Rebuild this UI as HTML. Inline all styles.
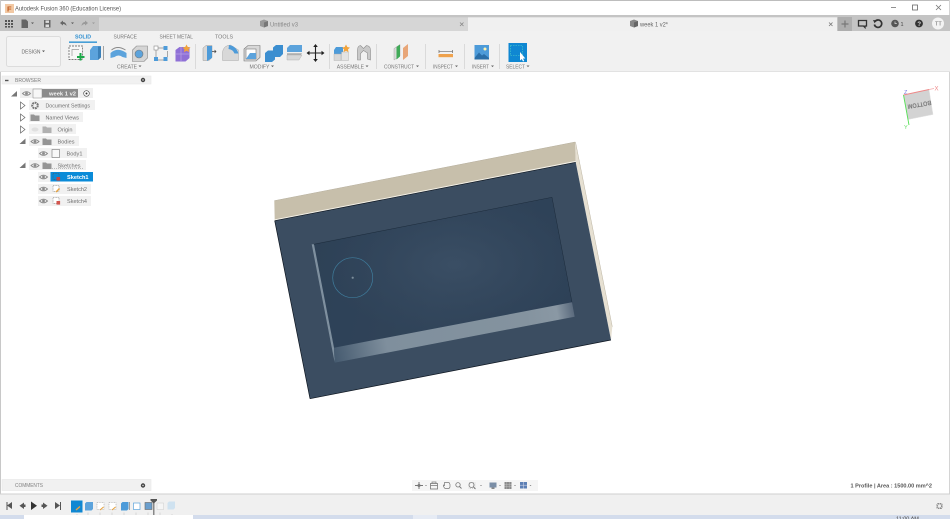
<!DOCTYPE html>
<html><head><meta charset="utf-8">
<style>
html,body{margin:0;padding:0;background:#fff;width:950px;height:519px;overflow:hidden}
svg{display:block}
text{font-family:"Liberation Sans",sans-serif;fill:#707070;font-size:5.3px}
.b{filter:url(#s)}
</style></head><body>
<svg width="950" height="519" viewBox="0 0 950 519" xmlns="http://www.w3.org/2000/svg">
<defs>
<filter id="s" x="-5%" y="-5%" width="110%" height="110%"><feGaussianBlur stdDeviation="0.38"/></filter>
<linearGradient id="fl" gradientUnits="userSpaceOnUse" x1="314" y1="244" x2="572" y2="302">
<stop offset="0" stop-color="#2f4359"/><stop offset=".5" stop-color="#35495f"/><stop offset="1" stop-color="#2f435a"/></linearGradient>
<radialGradient id="fr" gradientUnits="userSpaceOnUse" cx="455" cy="265" r="130" gradientTransform="translate(455 265) scale(1 .55) rotate(-11) translate(-455 -265)">
<stop offset="0" stop-color="#3c5066" stop-opacity=".75"/><stop offset="1" stop-color="#2c3f54" stop-opacity=".5"/></radialGradient>
<linearGradient id="wl" gradientUnits="userSpaceOnUse" x1="334" y1="355" x2="574" y2="310">
<stop offset="0" stop-color="#465b70"/><stop offset=".22" stop-color="#7f8f9d"/><stop offset=".8" stop-color="#84939f"/><stop offset=".93" stop-color="#8a98a4"/><stop offset="1" stop-color="#59697c"/></linearGradient>
<g id="eye"><path d="M-4 0Q0-3.6 4 0Q0 3.6-4 0Z" fill="#f4f4f4" stroke="#8a8a8a" stroke-width=".9"/><circle r="1.4" fill="#8a8a8a"/></g>
<g id="fold"><path d="M-4.5-3h3.5l1 1h4.500v5.500h-9z" fill="#959595"/></g>
</defs>

<!-- window frame -->
<rect x="0" y="0" width="950" height="1" fill="#bdbdbd"/>
<rect x="0" y="0" width="1" height="519" fill="#c8c8c8"/>
<rect x="949" y="0" width="1" height="519" fill="#d4d4d4"/>

<!-- title bar -->
<g class="b">
<rect x="5" y="4" width="9" height="9" fill="#f2c9a4"/>
<text x="7" y="11.500" style="font-size:7.500px;font-weight:bold;fill:#c0591a">F</text>
<text x="15" y="10.300" textLength="106" lengthAdjust="spacingAndGlyphs" style="font-size:6.400px;fill:#555">Autodesk Fusion 360 (Education License)</text>
<path d="M891 7.500h5" stroke="#777" stroke-width=".8"/>
<rect x="912.500" y="5" width="5" height="5" fill="none" stroke="#666" stroke-width=".8"/>
<path d="M936 5l5 5M941 5l-5 5" stroke="#777" stroke-width=".8"/>
</g>

<!-- tab row -->
<rect x="0" y="15" width="950" height="16" fill="#c4c4c4"/>
<rect x="99" y="17.300" width="369" height="13.700" fill="#d6d6d6"/>
<rect x="468" y="17.300" width="369" height="13.700" fill="#f0f0f0"/>
<g class="b">
<g fill="#555"><rect x="5" y="20" width="2" height="2"/><rect x="8" y="20" width="2" height="2"/><rect x="11" y="20" width="2" height="2"/><rect x="5" y="23" width="2" height="2"/><rect x="8" y="23" width="2" height="2"/><rect x="11" y="23" width="2" height="2"/><rect x="5" y="26" width="2" height="1.600"/><rect x="8" y="26" width="2" height="1.600"/><rect x="11" y="26" width="2" height="1.600"/></g>
<path d="M21.500 19.500h4.500l2 2v6.500h-6.500z" fill="#666"/><path d="M31 22.500l1.500 1.500 1.500-1.500z" fill="#555"/>
<rect x="44" y="20" width="6.500" height="7.500" fill="#666"/><rect x="45.500" y="20.500" width="3.500" height="2.400" fill="#ddd"/><rect x="45.500" y="24.500" width="3.500" height="2.500" fill="#ddd"/>
<path d="M60 23l3-2.500v1.500q3 0 3.500 4q-1.500-2-3.500-2v1.500z" fill="#666"/><path d="M71 22.500l1.500 1.500 1.500-1.500z" fill="#555"/>
<path d="M88 23l-3-2.500v1.500q-3 0-3.500 4q1.500-2 3.500-2v1.500z" fill="#999"/><path d="M92 22.500l1.500 1.500 1.500-1.500z" fill="#999"/>
<path d="M260 21l4-1.500 4 1.500v5l-4 1.500-4-1.500z" fill="#999"/><path d="M264 22.500v5l4-1.500v-5z" fill="#777"/>
<text x="270" y="26.500" textLength="28" lengthAdjust="spacingAndGlyphs" style="font-size:6.200px;fill:#888">Untitled v3</text>
<path d="M460 22.500l3.500 3.500M463.500 22.500l-3.500 3.500" stroke="#888" stroke-width=".8"/>
<path d="M630 21l4-1.500 4 1.500v5l-4 1.500-4-1.500z" fill="#888"/><path d="M634 22.500v5l4-1.500v-5z" fill="#666"/>
<text x="640" y="26.500" textLength="28" lengthAdjust="spacingAndGlyphs" style="font-size:6.200px;fill:#666">week 1 v2*</text>
<path d="M829 22.500l3.500 3.500M832.500 22.500l-3.500 3.500" stroke="#777" stroke-width=".8"/>
</g>
<rect x="838" y="17" width="14" height="14" fill="#aeaeae"/>
<g class="b">
<path d="M845 20.500v7M841.500 24h7" stroke="#777" stroke-width="1.200"/>
<path d="M858.500 20.500h8v5.500h-1.500v1.500l-1.500-1.500h-5z" fill="none" stroke="#333" stroke-width="1.300"/>
<path d="M875 21.500a3.700 3.700 0 1 1-.6 3" fill="none" stroke="#333" stroke-width="1.700"/><path d="M873 20l3.800.4-2.200 2.800z" fill="#333"/>
<circle cx="895" cy="23.500" r="3.800" fill="#555"/><path d="M895 21.500v2.200h2" stroke="#ddd" stroke-width=".7" fill="none"/>
<text x="900.500" y="26" style="font-size:5.500px;fill:#444">1</text>
<circle cx="919" cy="23.500" r="3.900" fill="#333"/><text x="917.400" y="26" style="font-size:6px;font-weight:bold;fill:#ddd">?</text>
<circle cx="938" cy="23.500" r="6" fill="#f3f3f3"/><text x="935" y="25.500" style="font-size:5.500px;fill:#666">TT</text>
</g>

<!-- ribbon -->
<rect x="0" y="31" width="950" height="40" fill="#f1f1f1"/>
<rect x="0" y="71" width="950" height="1" fill="#e2e2e2"/>
<rect x="6.500" y="36.500" width="54" height="30" rx="2" fill="#f4f4f4" stroke="#dcdcdc"/>
<g class="b">
<text x="21.500" y="53.500" textLength="19" lengthAdjust="spacingAndGlyphs" style="font-size:5.400px;fill:#666">DESIGN</text><path d="M42 50.500l1.500 1.600 1.500-1.600z" fill="#555"/>
<text x="75" y="38.500" textLength="16" lengthAdjust="spacingAndGlyphs" style="fill:#2f8fd0;font-weight:bold;font-size:5.200px">SOLID</text>
<rect x="69" y="41.500" width="28" height="1.300" fill="#1c8ad0"/>
<text x="113.500" y="38.500" textLength="23.500" lengthAdjust="spacingAndGlyphs" style="fill:#777">SURFACE</text>
<text x="159.500" y="38.500" textLength="33.500" lengthAdjust="spacingAndGlyphs" style="fill:#777">SHEET METAL</text>
<text x="215" y="38.500" textLength="18" lengthAdjust="spacingAndGlyphs" style="fill:#777">TOOLS</text>

<!-- create icons -->
<rect x="69" y="46" width="13.500" height="13.500" fill="#f7f7f7" stroke="#555" stroke-width=".7" stroke-dasharray="2 1"/>
<path d="M72 56V49.500h7" fill="none" stroke="#999" stroke-width=".7"/>
<path d="M80.500 53v7.500M77 57h7.500" stroke="#1fa84a" stroke-width="2"/>
<path d="M90 50l3-4h8v11l-3 3h-8z" fill="#5ba3dc"/><path d="M98 46.500h3v11l-3 2.500z" fill="#3b80b8"/>
<path d="M103.500 46v14" stroke="#555" stroke-width=".5"/>
<path d="M110.500 53q7-6.500 16 0v5l-4-1q-4-3-8 0l-4 1z" fill="#5ba3dc"/><path d="M111.500 50q6-5 14 0" fill="none" stroke="#888" stroke-width=".9"/>
<path d="M132.500 50l4-4h11v12l-3.500 3.500h-11.500z" fill="#d5d5d5" stroke="#888" stroke-width=".6"/><circle cx="139" cy="54" r="4" fill="#5ba3dc" stroke="#777" stroke-width=".6"/>
<path d="M157 48h7M167.500 51v6M157 60h7M156 50v7" stroke="#888" stroke-width=".7"/><rect x="154" y="46" width="4" height="4" fill="#fff" stroke="#888" stroke-width=".6"/><rect x="163.500" y="46" width="4" height="4" fill="#4d9bd9"/><rect x="154" y="57" width="4" height="4" fill="#4d9bd9"/><rect x="163.500" y="57" width="4" height="4" fill="#4d9bd9"/>
<path d="M175.500 50l4-3h10v11l-4 3.500h-10z" fill="#8f6fd6"/><path d="M181 47v14M176 54h13" stroke="#b8a2e6" stroke-width=".7"/>
<path d="M186.500 44.500l1.300 2.500 2.700.6-2 1.800.5 2.700-2.500-1.300-2.500 1.300.5-2.700-2-1.800 2.700-.6z" fill="#f2a33a"/>
<text x="117" y="68.500" textLength="20" lengthAdjust="spacingAndGlyphs" style="fill:#777">CREATE</text><path d="M138.500 65.500l1.500 1.600 1.500-1.600z" fill="#666"/>
<rect x="195" y="44" width=".8" height="25" fill="#d5d5d5"/>

<!-- modify icons -->
<path d="M203 48l3-2.500h6v12l-3 3h-6z" fill="#d8d8d8" stroke="#999" stroke-width=".5"/><path d="M207 46l5 0v12l-5 3z" fill="#4d9bd9"/><path d="M212 51.500h4m-1.500-1.500l1.500 1.500-1.500 1.500" stroke="#444" stroke-width=".7" fill="none"/>
<path d="M222.500 52q1-6.500 8-7l8 5v10.500h-16z" fill="#d8d8d8" stroke="#aaa" stroke-width=".5"/><path d="M229 45q7 1 9.500 8.500l-4 0q-1.500-4-6-4.500z" fill="#4d9bd9"/>
<path d="M244 49l4-3.500h12v12l-4 3.500h-12z" fill="#d8d8d8" stroke="#777" stroke-width=".6"/><rect x="246" y="49" width="10" height="10" fill="#fff" stroke="#777" stroke-width=".6"/><path d="M250 53h6v6h-10z" fill="#5ba3dc"/>
<path d="M265 53l3-2.500h5v-3l3-2.500h7v9l-3 3h-5v2.500l-3 2.500h-7z" fill="#3b8ed0"/>
<path d="M287 48l3-3h12v7h-15z" fill="#5ba3dc"/><path d="M287 53.500l15 0-1 1h-14z" fill="#888"/><path d="M287 55h15l-3 5h-12z" fill="#d8d8d8" stroke="#aaa" stroke-width=".4"/>
<path d="M315.500 45.500v15M308 53h15" stroke="#222" stroke-width="1.100"/><path d="M315.500 44l-2.300 3h4.600zM315.500 62l-2.300-3h4.600zM306.500 53l3-2.300v4.600zM324.500 53l-3-2.300v4.600z" fill="#222"/>
<text x="249.500" y="68.500" textLength="20" lengthAdjust="spacingAndGlyphs" style="fill:#777">MODIFY</text><path d="M271 65.500l1.500 1.600 1.500-1.600z" fill="#666"/>
<rect x="329" y="44" width=".8" height="25" fill="#d5d5d5"/>

<!-- assemble -->
<path d="M334 50l2-3h7v7h-9z" fill="#4d9bd9"/><rect x="334" y="54" width="7" height="6.500" fill="#d8d8d8" stroke="#aaa" stroke-width=".4"/><rect x="341.500" y="52" width="7" height="8.500" fill="#e3e3e3" stroke="#aaa" stroke-width=".4"/>
<path d="M346 44.500l1.300 2.500 2.700.6-2 1.800.5 2.700-2.500-1.300-2.500 1.300.5-2.700-2-1.800 2.700-.6z" fill="#f2a33a"/>
<path d="M357.500 50q0-4 3-4.500l3 3 3-3q4 .5 4 4.500v10l-3-1v-6l-4-2.500-3 3v6.500l-3 0z" fill="#c9c9c9" stroke="#8d8d8d" stroke-width=".6"/>
<text x="336.700" y="68.500" textLength="27.300" lengthAdjust="spacingAndGlyphs" style="fill:#777">ASSEMBLE</text><path d="M365.500 65.500l1.500 1.600 1.500-1.600z" fill="#666"/>
<rect x="376" y="44" width=".8" height="25" fill="#d5d5d5"/>

<!-- construct -->
<path d="M394 48.500l6-4v11.500l-6 4z" fill="#d9d9d9" stroke="#999" stroke-width=".4"/><path d="M396.500 47l3.500-2.500v12l-3.500 3z" fill="#3faa58"/><path d="M403 48l5-4v12l-5 4z" fill="#e8a678"/>
<text x="384" y="68.500" textLength="30" lengthAdjust="spacingAndGlyphs" style="fill:#777">CONSTRUCT</text><path d="M416 65.500l1.500 1.600 1.500-1.600z" fill="#666"/>
<rect x="425" y="44" width=".8" height="25" fill="#d5d5d5"/>

<!-- inspect -->
<path d="M439 50v3M452.500 50v3" stroke="#666" stroke-width=".7"/><path d="M439 51.500h13.500" stroke="#666" stroke-width=".6"/>
<rect x="438.500" y="54" width="14.500" height="3.200" fill="#efa24d"/>
<text x="433" y="68.500" textLength="20" lengthAdjust="spacingAndGlyphs" style="fill:#777">INSPECT</text><path d="M455 65.500l1.500 1.600 1.500-1.600z" fill="#666"/>
<rect x="464" y="44" width=".8" height="25" fill="#d5d5d5"/>

<!-- insert -->
<rect x="474.500" y="45" width="14.500" height="14.500" fill="#4d9bd9"/>
<path d="M474.500 58l4.500-5.500 3 3 2-1.500 5 4v1.500h-14.500z" fill="#2a6ea8"/><circle cx="485" cy="49" r="1.500" fill="#fff3b0"/>
<text x="472" y="68.500" textLength="17" lengthAdjust="spacingAndGlyphs" style="fill:#777">INSERT</text><path d="M491 65.500l1.500 1.600 1.500-1.600z" fill="#666"/>
<rect x="499" y="44" width=".8" height="25" fill="#d5d5d5"/>
</g>
<!-- select -->
<rect x="508.500" y="43" width="18.500" height="19" fill="#0f87d2"/>
<rect x="510.500" y="45.500" width="12" height="10" fill="none" stroke="#4fd0c8" stroke-width=".6" stroke-dasharray="1.500 1"/>
<path d="M520 52v8.500l1.800-1.500 1.200 2.500 1.200-.5-1.200-2.500h2.300z" fill="#fff"/>
<g class="b"><text x="506" y="68.500" textLength="19" lengthAdjust="spacingAndGlyphs" style="fill:#777">SELECT</text><path d="M526.500 65.500l1.500 1.600 1.500-1.600z" fill="#666"/></g>

<!-- browser -->
<rect x="2" y="76" width="149" height="8" fill="#f1f1f1" stroke="#e7e7e7" stroke-width=".6"/>
<g class="b">
<path d="M5 80.500h3.500" stroke="#555" stroke-width="1.400"/>
<text x="15" y="82" textLength="26" lengthAdjust="spacingAndGlyphs" style="fill:#808080">BROWSER</text>
<circle cx="143" cy="80" r="2.200" fill="#444"/><circle cx="143" cy="80" r=".7" fill="#eee"/>
<path d="M17 91l-6 5.500h6z" fill="#777"/>
<rect x="20" y="88" width="73" height="10" fill="#efefef"/>
<use href="#eye" x="26.500" y="93.500"/>
<rect x="33" y="89" width="9" height="9" fill="#f7f7f7" stroke="#888" stroke-width=".5"/>
<rect x="42" y="89" width="36" height="8.500" fill="#8c8c8c"/>
<text x="49" y="95.500" textLength="27" lengthAdjust="spacingAndGlyphs" style="fill:#f3f3f3;font-size:5.800px;font-weight:bold">week 1 v2</text>
<circle cx="86.500" cy="93.500" r="2.800" fill="#fff" stroke="#444" stroke-width=".6"/><circle cx="86.500" cy="93.500" r="1" fill="#333"/>

<path d="M20.500 102l4.500 3.500-4.500 3.500z" fill="#fff" stroke="#666" stroke-width=".7"/>
<rect x="29" y="100" width="66" height="10" fill="#f1f1f1"/>
<circle cx="35" cy="105.500" r="2.800" fill="none" stroke="#777" stroke-width="2" stroke-dasharray="1.800 .7"/>
<text x="45.500" y="107.500" textLength="44.500" lengthAdjust="spacingAndGlyphs" style="fill:#707070">Document Settings</text>

<path d="M20.500 114l4.500 3.500-4.500 3.500z" fill="#fff" stroke="#666" stroke-width=".7"/>
<rect x="29" y="112" width="54" height="10" fill="#f1f1f1"/>
<use href="#fold" x="35" y="117.500"/>
<text x="45.500" y="119.500" textLength="33.500" lengthAdjust="spacingAndGlyphs">Named Views</text>

<path d="M20.500 126l4.500 3.500-4.500 3.500z" fill="#fff" stroke="#666" stroke-width=".7"/>
<rect x="29" y="124" width="47" height="10" fill="#f1f1f1"/>
<ellipse cx="35" cy="129.500" rx="3.500" ry="2" fill="#e0e0e0"/>
<use href="#fold" x="47" y="129.500" opacity=".7"/>
<text x="57.500" y="131.500" textLength="15" lengthAdjust="spacingAndGlyphs">Origin</text>

<path d="M25.500 138.500l-6 5.500h6z" fill="#777"/>
<rect x="29" y="136" width="50" height="10" fill="#f1f1f1"/>
<use href="#eye" x="35" y="141.500"/>
<use href="#fold" x="47" y="141.500"/>
<text x="57.500" y="143.500" textLength="17" lengthAdjust="spacingAndGlyphs">Bodies</text>

<rect x="38" y="148" width="49" height="10" fill="#f1f1f1"/>
<use href="#eye" x="43.500" y="153.500"/>
<rect x="52" y="149.500" width="7.500" height="8" fill="#f8f8f8" stroke="#777" stroke-width=".6"/>
<text x="66.500" y="155.500" textLength="16" lengthAdjust="spacingAndGlyphs">Body1</text>

<path d="M25.500 162.500l-6 5.500h6z" fill="#777"/>
<rect x="29" y="160" width="57" height="10" fill="#f1f1f1"/>
<use href="#eye" x="35" y="165.500"/>
<use href="#fold" x="47" y="165.500"/>
<text x="57.500" y="167.500" textLength="23" lengthAdjust="spacingAndGlyphs">Sketches</text>
<path d="M52 168.500h32" stroke="#888" stroke-width=".5" stroke-dasharray="1 1"/>

<rect x="38" y="172" width="13" height="10" fill="#f1f1f1"/>
<use href="#eye" x="43.500" y="177"/>
</g>
<rect x="50.500" y="172" width="42.500" height="9.500" fill="#0a8bd8"/>
<g class="b">
<rect x="53" y="173.500" width="6" height="6" fill="none" stroke="#555" stroke-width=".5" stroke-dasharray="1 .6"/>
<rect x="56.500" y="177" width="3.600" height="3.600" fill="#c9453f"/>
<text x="67" y="178.800" textLength="21.500" lengthAdjust="spacingAndGlyphs" style="fill:#fff;font-weight:bold;font-size:5.400px">Sketch1</text>

<rect x="38" y="184" width="53" height="10" fill="#f1f1f1"/>
<use href="#eye" x="43.500" y="189"/>
<rect x="53" y="185.500" width="6" height="6" fill="#fff" stroke="#777" stroke-width=".5" stroke-dasharray="1 .6"/>
<path d="M56 192l3.500-3.500" stroke="#e8a33f" stroke-width="1.400"/>
<text x="67" y="191" textLength="20" lengthAdjust="spacingAndGlyphs">Sketch2</text>

<rect x="38" y="196" width="53" height="10" fill="#f1f1f1"/>
<use href="#eye" x="43.500" y="201"/>
<rect x="53" y="197.500" width="6" height="6" fill="#fff" stroke="#777" stroke-width=".5" stroke-dasharray="1 .6"/>
<rect x="56.500" y="201" width="3.600" height="3.600" fill="#d2544e"/>
<text x="67" y="203" textLength="20" lengthAdjust="spacingAndGlyphs">Sketch4</text>
</g>

<!-- model -->
<polygon points="274.300,200.700 575.200,142 575.700,161.700 274.700,220" fill="#c7bfab"/>
<polygon points="575.500,142 612.300,326.700 611,340 575.700,162" fill="#e6e0d2"/>
<path d="M575.500 142L612.300 326.700" stroke="#bcb5a3" stroke-width=".5"/>
<path d="M274.300 200.700L575.200 142" stroke="#b5ae9c" stroke-width=".5" fill="none"/>
<path d="M274.700 220L575.700 161.500" stroke="#f4f1e8" stroke-width="1.200"/>
<polygon points="274.700,220.700 575.700,162.300 611,340 310,398.700" fill="#3b4d61"/>
<path d="M274.700 220.700L575.700 162.300M310 398.700L611 340M274.700 220.700L310 398.700" stroke="#0e1620" stroke-width=".7" fill="none"/>
<polygon points="311.700,244.300 552,197.300 574.700,316.700 334.700,362.700" fill="#2e4155"/>
<polygon points="314,244.300 552,197.300 572,302.300 334,347.700" fill="url(#fl)"/>
<polygon points="314,244.300 552,197.300 572,302.300 334,347.700" fill="url(#fr)"/>
<polygon points="311.700,244.300 314,244.300 334,347.700 334.700,362.700" fill="#7f909f"/>
<polygon points="334,347.700 572,302.300 574.700,316.700 334.700,362.700" fill="url(#wl)"/>
<path d="M314 244.300L552 197.300L572 302.300" stroke="#1d2c3c" stroke-width=".5" fill="none"/>
<circle cx="352.700" cy="277.700" r="20" fill="none" stroke="#3f7c9c" stroke-width=".7"/>
<circle cx="352.700" cy="277.700" r="1.100" fill="#7c8e9c"/>

<!-- view cube -->
<polygon points="903.500,95 929,89.500 933,114.500 908,119.500" fill="#d3d3d3" stroke="#e3e3e3" stroke-width=".5"/>
<path d="M903.500 95L929 89.500" stroke="#e88" stroke-width=".9"/><path d="M929 89.500l5-1" stroke="#f3a9a9" stroke-width=".7"/>
<path d="M903.500 95l5.500 30" stroke="#55e055" stroke-width=".9"/>
<g class="b">
<text transform="translate(931 100.500) rotate(170)" textLength="24" lengthAdjust="spacingAndGlyphs" style="font-size:6.400px;font-weight:bold;fill:#777">BOTTOM</text>
<text x="934.500" y="90.500" style="fill:#e88;font-size:6px">X</text>
<text x="904" y="129" style="fill:#6d6;font-size:5.500px">Y</text>
<text x="904" y="94" style="fill:#77d;font-size:5.500px">Z</text>
</g>

<!-- comments -->
<rect x="2" y="479.500" width="149" height="11" fill="#f1f1f1" stroke="#e7e7e7" stroke-width=".6"/>
<g class="b">
<text x="15" y="487" textLength="28" lengthAdjust="spacingAndGlyphs" style="fill:#808080">COMMENTS</text>
<circle cx="143" cy="485.500" r="2.200" fill="#444"/><circle cx="143" cy="485.500" r=".7" fill="#eee"/>
</g>

<!-- nav bar -->
<rect x="412" y="480" width="126" height="11" fill="#f5f5f5"/>
<g class="b" fill="#777" stroke="none">
<path d="M419 482v7M415 485.500h8" stroke="#777" stroke-width="1"/><circle cx="419" cy="485.500" r="1.500"/>
<path d="M425 485l1 1 1-1z"/>
<rect x="430.500" y="483.500" width="7" height="5.500" fill="none" stroke="#777" stroke-width=".8"/><path d="M432 483.500v-1.500h4v1.500M430.500 485.500h7" stroke="#777" stroke-width=".7" fill="none"/>
<path d="M445 488.500q-2-2-1.500-3.500l1 .5v-3h4.500l1 2v2.500l-1 1.500z" fill="#f5f5f5" stroke="#777" stroke-width=".7"/>
<circle cx="458" cy="484.800" r="2.200" fill="none" stroke="#777" stroke-width=".8"/><path d="M459.500 486.500l2 2" stroke="#777" stroke-width=".9"/>
<circle cx="471.500" cy="485" r="2.500" fill="none" stroke="#777" stroke-width=".8"/><rect x="469" y="482.500" width="6" height="6" fill="none" stroke="#999" stroke-width=".4" stroke-dasharray="1 1"/><path d="M473.500 487l2 2" stroke="#777" stroke-width=".9"/>
<path d="M480 485l1 1 1-1z"/>
<rect x="489.500" y="482.500" width="7" height="5" fill="#7a8ea6"/><rect x="491.500" y="487.500" width="3" height="1.500" fill="#888"/>
<path d="M499 485l1 1 1-1z"/>
<rect x="504.500" y="482" width="7" height="7" fill="#8a8a8a"/><path d="M506.800 482v7M509.200 482v7M504.500 484.300h7M504.500 486.700h7" stroke="#c6c6c6" stroke-width=".4"/>
<path d="M514 485l1 1 1-1z"/>
<rect x="520" y="482" width="7" height="6.500" fill="#5d80b5"/><path d="M523.500 482v6.500M520 485.200h7" stroke="#dde" stroke-width=".5"/>
<path d="M529.500 485l1 1 1-1z"/>
</g>
<g class="b"><text x="850.500" y="487.500" textLength="81.500" lengthAdjust="spacingAndGlyphs" style="fill:#555;font-size:5.300px;font-weight:bold">1 Profile | Area : 1500.00 mm^2</text></g>

<!-- timeline -->
<rect x="0" y="494" width="950" height="21" fill="#f0f0f0"/>
<rect x="0" y="493.500" width="950" height="1" fill="#cfcfcf"/>
<g class="b">
<path d="M7 502v8" stroke="#555" stroke-width="1"/><path d="M12 502v7l-5-3.500z" fill="#555"/>
<path d="M24 502.500v6.500l-4.500-3.300z" fill="#555"/><rect x="24" y="504.500" width="1.500" height="2.500" fill="#555"/>
<path d="M31 501.500v8.500l6-4.200z" fill="#333"/>
<path d="M43 502.500v6.500l4.500-3.300z" fill="#555"/><rect x="41.500" y="504.500" width="1.500" height="2.500" fill="#555"/>
<path d="M55 502v7l5-3.500z" fill="#555"/><path d="M60.500 502v8" stroke="#555" stroke-width="1"/>
</g>
<rect x="71" y="500.500" width="11.500" height="12" fill="#0f87d2"/>
<g class="b">
<path d="M76 510l4-3.500" stroke="#e8a33f" stroke-width="1.400"/>
<path d="M77 514v1.500h95V514M88 512.500v3M100 512.500v3M112 512.500v3M124 512.500v3M136 512.500v3M148 512.500v3M160 512.500v3" stroke="#bbb" stroke-width=".5" fill="none"/>
<path d="M85 503.500l1.500-1.500h6.500v7l-1.500 1.500H85z" fill="#5ba3dc"/>
<rect x="97" y="502.500" width="7" height="7" fill="#fff" stroke="#999" stroke-width=".5" stroke-dasharray="1 .7"/><path d="M100 510l3.500-3" stroke="#e8a33f" stroke-width="1.100"/>
<rect x="109" y="502.500" width="7" height="7" fill="#fff" stroke="#999" stroke-width=".5" stroke-dasharray="1 .7"/><path d="M112 510l3.500-3" stroke="#e8a33f" stroke-width="1.100"/>
<path d="M121 503.500l1.500-1.500h6v7l-1.500 1.500H121z" fill="#4d9bd9"/><path d="M129.500 502v8" stroke="#555" stroke-width=".5"/>
<rect x="133.500" y="503" width="6.500" height="6.500" fill="#fff" stroke="#5ba3dc" stroke-width=".7"/>
<rect x="145" y="502.500" width="7" height="7" fill="#6a9fce" stroke="#666" stroke-width=".6"/>
<rect x="157" y="503" width="6.500" height="6.500" fill="#f5f5f5" stroke="#ccc" stroke-width=".5"/>
<path d="M167.500 503l1.500-1.500h6v6.500l-1.500 1.500H167.500z" fill="#cfe2f0"/>
</g>
<rect x="153" y="501" width="1.500" height="14" fill="#888"/>
<path d="M150.500 499h6.500v1.500l-3.200 3-3.300-3z" fill="#555"/>
<g class="b">
<circle cx="939.500" cy="506" r="2.700" fill="none" stroke="#8c8c8c" stroke-width="2.200" stroke-dasharray="1.500 .6"/>
</g>

<!-- bottom strip -->
<rect x="0" y="515" width="950" height="4" fill="#d3dcec"/>
<rect x="24" y="515" width="169" height="4" fill="#fff"/>
<rect x="413" y="515" width="24" height="4" fill="#e6ebf4"/>
<g class="b"><text x="896" y="520.500" style="fill:#444;font-size:5.500px">11:00 AM</text></g>
</svg>
</body></html>
